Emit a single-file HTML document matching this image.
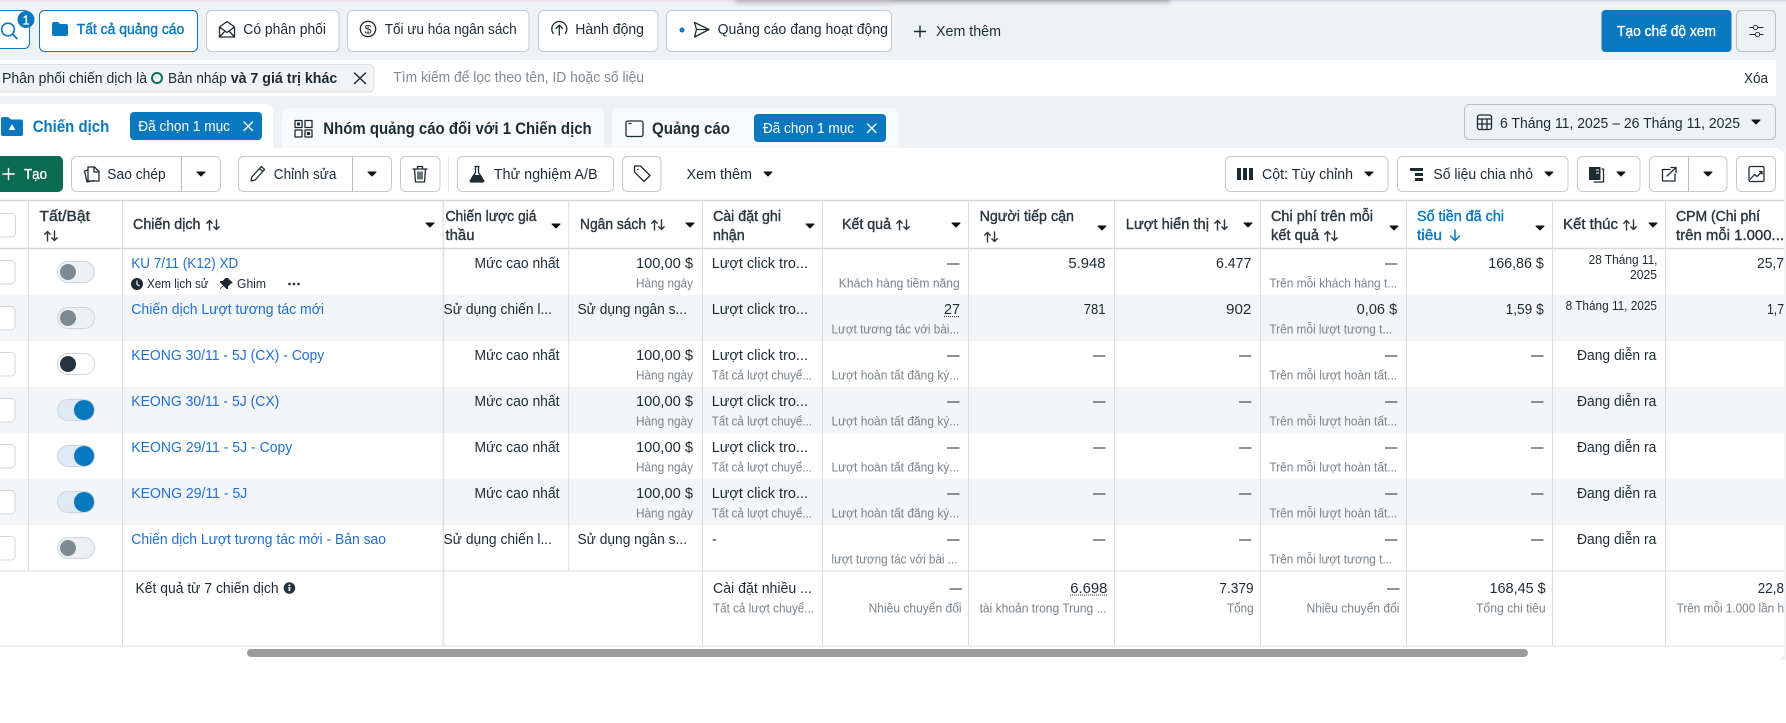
<!DOCTYPE html>
<html lang="vi">
<head>
<meta charset="utf-8">
<title>Chiến dịch</title>
<style>
html,body{margin:0;padding:0;background:#fff;width:1786px;height:723px;overflow:hidden}
svg{display:block}
text{font-family:"Liberation Sans","Noto Sans CJK SC",sans-serif;font-size:14.5px;fill:#1c2b33}
.b{font-weight:bold}
.s{font-size:12.5px;fill:#78838b}
.l{fill:#1f6fd0}
.u{fill:#0a78be;stroke:#0a78be;stroke-width:.4}
.w{fill:#fff}
.wb{fill:#fff;stroke:#fff;stroke-width:.35}
.h{fill:#2b3840;stroke:#2b3840;stroke-width:.4}
.t{font-size:16.5px;font-weight:bold}
.d{font-size:12.5px}
.btn{fill:#fff;stroke:#c3cbd2;stroke-width:1}
.ln{stroke:#dadde1;stroke-width:1}
.ic{fill:none;stroke:#1c2b33;stroke-width:1.3;stroke-linecap:round;stroke-linejoin:round}
.tri{fill:#1c2b33;stroke:#1c2b33;stroke-width:1;stroke-linejoin:round}
.cb{fill:#fff;stroke:#d0d5da}
.off{fill:#eef1f4;stroke:#cdd5dc}
.on{fill:#dfeaf4;stroke:#cdd5dc}
</style>
</head>
<body>
<svg width="1786" height="723" viewBox="0 0 1786 723" xmlns="http://www.w3.org/2000/svg">
<defs>
<filter id="bl" x="-10%" y="-200%" width="120%" height="500%"><feGaussianBlur stdDeviation="2.5"/></filter>
<linearGradient id="sh" x1="0" x2="1" y1="0" y2="0"><stop offset="0" stop-color="#000" stop-opacity=".05"/><stop offset="1" stop-color="#000" stop-opacity="0"/></linearGradient>
<g id="sort" fill="none" stroke="#2b3840" stroke-width="1.4" stroke-linecap="round" stroke-linejoin="round"><path d="M3.500 11V1.500M.8 4.200l2.700-2.700 2.700 2.700"/><path d="M10.500 1V10.500M7.800 7.800l2.700 2.700 2.700-2.700"/></g>
<path id="dn" d="M0 0h8l-4 4z" fill="#111" stroke="#111" stroke-width="1" stroke-linejoin="round"/>
</defs>

<rect width="1786" height="723" fill="#fff"/>
<rect width="1786" height="660" fill="#eff2f5"/>
<rect x="0" y="0" width="890" height="1.5" fill="#ecdfe1"/>
<rect x="890" y="0" width="896" height="1.5" fill="#d3dae4"/>
<rect x="735" y="-3" width="435" height="6" fill="#000" opacity=".22" filter="url(#bl)"/>

<!-- top row -->
<rect x="-10" y="10.500" width="39.500" height="38" rx="5" fill="#fff" stroke="#0a78be"/>
<circle cx="8" cy="29.500" r="6.300" fill="none" stroke="#0a78be" stroke-width="1.700"/>
<path d="M12.500 34l4.500 4.500" stroke="#0a78be" stroke-width="1.800" stroke-linecap="round"/>
<circle cx="26" cy="19.500" r="8.500" fill="#0a78be"/>
<text x="22.500" y="24.500" textLength="7" lengthAdjust="spacingAndGlyphs" class="wb" style="font-size:13px">1</text>

<rect x="39.500" y="10.500" width="158" height="41" rx="5" fill="#fff" stroke="#0a78be"/>
<path d="M52 24a2 2 0 0 1 2-2h4l2 2h6a2 2 0 0 1 2 2v8a2 2 0 0 1-2 2H54a2 2 0 0 1-2-2z" fill="#0a78be"/>
<text x="76.700" y="34" textLength="107.600" lengthAdjust="spacingAndGlyphs" class="u">Tất cả quảng cáo</text>

<rect x="206.500" y="10.500" width="132.500" height="41" rx="5" class="btn"/>
<path d="M219.500 27l7.500-5.500 7.500 5.500v10h-15zM219.500 27l7.500 5.500 7.500-5.500M219.500 37l5.500-6M234.500 37l-5.500-6" class="ic" stroke-width="1"/>
<text x="243.300" y="34" textLength="82.700" lengthAdjust="spacingAndGlyphs">Có phân phối</text>

<rect x="347.500" y="10.500" width="181.500" height="41" rx="5" class="btn"/>
<circle cx="368" cy="29" r="7.700" class="ic"/>
<text x="364.500" y="33.500" textLength="7" lengthAdjust="spacingAndGlyphs" style="font-size:12px">$</text>
<text x="384.700" y="34" textLength="132" lengthAdjust="spacingAndGlyphs">Tối ưu hóa ngân sách</text>

<rect x="538.500" y="10.500" width="119.500" height="41" rx="5" class="btn"/>
<path d="M553.300 33.500a7.500 7.500 0 1 1 12 0M559.300 35v-9.500M556 28.500l3.300-3.300 3.300 3.300" class="ic"/>
<text x="575.300" y="34" textLength="68.700" lengthAdjust="spacingAndGlyphs">Hành động</text>

<rect x="666.500" y="10.500" width="225" height="41" rx="5" class="btn"/>
<circle cx="682" cy="30" r="2.500" fill="#0a78be"/>
<path d="M694.500 22.500L709 29.500 694.500 37l2-7.500zM696.500 29.500H709" class="ic" stroke-width="1"/>
<text x="717.600" y="34" textLength="170.400" lengthAdjust="spacingAndGlyphs">Quảng cáo đang hoạt động</text>

<path d="M920 26v11M914.500 31.500h11" stroke="#1c2b33" stroke-width="1.400" stroke-linecap="round"/>
<text x="936" y="36" textLength="65" lengthAdjust="spacingAndGlyphs">Xem thêm</text>

<rect x="1601.500" y="10" width="130" height="42" rx="4" fill="#0a78be"/>
<text x="1617" y="36" textLength="99" lengthAdjust="spacingAndGlyphs" class="wb">Tạo chế độ xem</text>
<rect x="1736.500" y="10.500" width="39" height="41" rx="5" fill="none" stroke="#b5bfc8"/>
<path d="M1749.500 27.500h3.500M1758 27.500h5.500M1749.500 34.500h5.500M1760 34.500h3.500" fill="none" stroke="#1c2b33" stroke-width=".9"/>
<circle cx="1755.500" cy="27.500" r="2.200" fill="none" stroke="#1c2b33" stroke-width=".9"/>
<circle cx="1757.500" cy="34.500" r="2.200" fill="none" stroke="#1c2b33" stroke-width=".9"/>

<!-- filter row -->
<rect x="0" y="60" width="1776" height="36" rx="2" fill="#fff"/>
<rect x="-4" y="64.500" width="378" height="27.500" rx="5" fill="#f2f3f5" stroke="#dcdfe2"/>
<text x="2" y="83" textLength="145" lengthAdjust="spacingAndGlyphs">Phân phối chiến dịch là</text>
<circle cx="157" cy="78" r="5" fill="none" stroke="#0b7355" stroke-width="2"/>
<text x="168" y="83" textLength="58.700" lengthAdjust="spacingAndGlyphs">Bản nháp</text>
<text x="230.700" y="83" textLength="106.600" lengthAdjust="spacingAndGlyphs" class="b">và 7 giá trị khác</text>
<path d="M354.500 73l11 10.500M365.500 73l-11 10.500" stroke="#1c2b33" stroke-width="1.500" stroke-linecap="round"/>
<text x="393.300" y="82" textLength="250.700" lengthAdjust="spacingAndGlyphs" style="fill:#808a92">Tìm kiếm để lọc theo tên, ID hoặc số liệu</text>
<text x="1744" y="83" textLength="24" lengthAdjust="spacingAndGlyphs">Xóa</text>

<!-- tabs -->
<path d="M-8 160V112a8 8 0 0 1 8-8h265a8 8 0 0 1 8 8v48z" fill="#fff"/>
<path d="M282 160v-44a8 8 0 0 1 8-8h306a8 8 0 0 1 8 8v44z" fill="#f8fafb"/>
<path d="M612 160v-44a8 8 0 0 1 8-8h271a8 8 0 0 1 8 8v44z" fill="#f8fafb"/>

<path d="M1 119a2 2 0 0 1 2-2h5l3 2.500h10a2 2 0 0 1 2 2V134a2 2 0 0 1-2 2H3a2 2 0 0 1-2-2z" fill="#0a78be"/>
<path d="M12 124l3.300 6h-6.600z" fill="#fff"/>
<text x="32.700" y="132" textLength="76.600" lengthAdjust="spacingAndGlyphs" class="t" style="fill:#0a78be">Chiến dịch</text>
<rect x="130" y="112" width="132" height="28" rx="4" fill="#0a78be"/>
<text x="138.300" y="131" textLength="91.700" lengthAdjust="spacingAndGlyphs" class="w">Đã chọn 1 mục</text>
<path d="M244 122l8.500 8.500M252.500 122l-8.500 8.500" stroke="#fff" stroke-width="1.300" stroke-linecap="round"/>

<path d="M295 120.500h7v7h-7zM305 120.500h7v7h-7zM295 130h7v7h-7zM305 130h7v7h-7z" class="ic" stroke-width="1.100"/>
<rect x="297" y="122.500" width="3" height="3" fill="#1c2b33"/><rect x="307" y="132" width="3" height="3" fill="#1c2b33"/>
<text x="323.300" y="134" textLength="268.400" lengthAdjust="spacingAndGlyphs" class="t">Nhóm quảng cáo đối với 1 Chiến dịch</text>

<rect x="626" y="121" width="17" height="15.500" rx="2" class="ic" stroke-width="1.100"/>
<path d="M629 123.500h2" class="ic" stroke-width="1"/>
<text x="652" y="134" textLength="78" lengthAdjust="spacingAndGlyphs" class="t">Quảng cáo</text>
<rect x="754" y="114" width="132" height="28" rx="4" fill="#0a78be"/>
<text x="763" y="133" textLength="91" lengthAdjust="spacingAndGlyphs" class="w">Đã chọn 1 mục</text>
<path d="M867.500 124l8.500 8.500M876 124l-8.500 8.500" stroke="#fff" stroke-width="1.300" stroke-linecap="round"/>

<rect x="1464.500" y="104.500" width="311" height="35" rx="5" fill="#eff2f5" stroke="#b5bfc8"/>
<rect x="1477.500" y="115" width="14" height="14.500" rx="2" class="ic" stroke-width="1.100"/>
<path d="M1477.500 119h14M1477.500 124h14M1482 119v10.500M1487 119v10.500" class="ic" stroke-width=".9"/>
<text x="1500" y="128" textLength="240" lengthAdjust="spacingAndGlyphs">6 Tháng 11, 2025 – 26 Tháng 11, 2025</text>
<use href="#dn" x="1752" y="120"/>

<!-- toolbar white panel -->
<path d="M0 148H1776a8 8 0 0 1 8 8V652a8 8 0 0 1-8 8H0z" fill="#fff"/>

<rect x="-6" y="156" width="69" height="36" rx="5" fill="#0a6b50"/>
<path d="M8.500 168.500v11M3 174h11" stroke="#fff" stroke-width="1.500" stroke-linecap="round"/>
<text x="24" y="179" textLength="23" lengthAdjust="spacingAndGlyphs" class="wb">Tạo</text>

<rect x="71.500" y="156.500" width="149" height="35" rx="5" class="btn"/>
<path d="M181.500 157v35" style="stroke:#b5bfc8"/>
<path d="M88 167h6.500l4.500 4.500V181H88zM94 167v5h5M88 170l-3.500 1 2.500 11 7-1.500" class="ic" stroke-width="1"/>
<text x="107.300" y="179" textLength="58.400" lengthAdjust="spacingAndGlyphs">Sao chép</text>
<use href="#dn" x="197" y="172"/>

<rect x="238.500" y="156.500" width="153" height="35" rx="5" class="btn"/>
<path d="M352.500 157v35" style="stroke:#b5bfc8"/>
<path d="M251 181l.8-4 9.500-10.500 3.300 3-9.500 10.500zM259.500 168.500l3.300 3" class="ic" stroke-width="1"/>
<text x="273.800" y="179" textLength="62.600" lengthAdjust="spacingAndGlyphs">Chỉnh sửa</text>
<use href="#dn" x="368" y="172"/>

<rect x="400.500" y="156.500" width="39.500" height="35" rx="5" class="btn"/>
<path d="M413 169h14M417.500 169v-2.500h5v2.500M414.500 169l1 13h9l1-13M418 172v7M420 172v7M422 172v7" class="ic" stroke-width=".9"/>
<path d="M448.500 156v36" style="stroke:#e4e7ea"/>

<rect x="457.500" y="156.500" width="156" height="35" rx="5" class="btn"/>
<path d="M475 166.500h4M475.500 166.500v6l-5 8a1 1 0 0 0 1 1.500h11a1 1 0 0 0 1-1.500l-5-8v-6" class="ic" stroke-width="1"/>
<path d="M473 175h8l3.500 6a.7.7 0 0 1-.7 1h-13.600a.7.7 0 0 1-.7-1z" fill="#1c2b33"/>
<text x="493.700" y="179" textLength="103.900" lengthAdjust="spacingAndGlyphs">Thử nghiệm A/B</text>

<rect x="622.500" y="156.500" width="38.500" height="35" rx="5" class="btn"/>
<path d="M634.500 168.500v-2.500h6l9.500 9.500-6 6-9.500-9.500zM637.500 169.500h.5" class="ic" stroke-width="1"/>
<text x="686.500" y="179" textLength="65.500" lengthAdjust="spacingAndGlyphs">Xem thêm</text>
<use href="#dn" x="764" y="172"/>

<rect x="1225.500" y="156.500" width="162.500" height="35" rx="5" class="btn"/>
<path d="M1237 168h4v12h-4zM1243 168h4v12h-4zM1249 168h4v12h-4z" fill="#1c2b33"/>
<text x="1262" y="179" textLength="91" lengthAdjust="spacingAndGlyphs">Cột: Tùy chỉnh</text>
<use href="#dn" x="1365" y="172"/>

<rect x="1397.500" y="156.500" width="170.500" height="35" rx="5" class="btn"/>
<path d="M1410 168h13v3h-13zM1415 173h8v3h-8zM1415 178h8v3h-8z" fill="#1c2b33"/>
<text x="1433.400" y="179" textLength="99.600" lengthAdjust="spacingAndGlyphs">Số liệu chia nhỏ</text>
<use href="#dn" x="1545" y="172"/>

<rect x="1577.500" y="156.500" width="62.500" height="35" rx="5" class="btn"/>
<path d="M1589 167h11.500v13H1589z" fill="#1c2b33"/>
<path d="M1602 169h1.500v13H1594" class="ic" stroke-width="1.200"/>
<path d="M1596 170h3M1596 173h3" stroke="#fff"/>
<use href="#dn" x="1617" y="172"/>

<rect x="1649.500" y="156.500" width="77.500" height="35" rx="5" class="btn"/>
<path d="M1688.500 157v35" style="stroke:#b5bfc8"/>
<path d="M1670 169.500h-7.500v11.500h12.500v-7M1667 176l9-8.500M1671 167.500h5v5" class="ic" stroke-width="1.200"/>
<use href="#dn" x="1704" y="172"/>

<rect x="1736.500" y="156.500" width="39" height="35" rx="5" class="btn"/>
<rect x="1749" y="166.500" width="15" height="15" rx="1.500" class="ic" stroke-width="1"/>
<path d="M1750.500 179l4-4.500 2.500 2 5-5M1759.500 171.500h2.500v2.500" class="ic" stroke-width="1"/>

<!-- table backgrounds -->
<rect x="0" y="295" width="1784" height="46" fill="#f3f5f7"/>
<rect x="0" y="387" width="1784" height="46" fill="#f3f5f7"/>
<rect x="0" y="479" width="1784" height="46" fill="#f3f5f7"/>

<!-- table lines -->
<path d="M0 200.500H1784M0 248.500H1784" stroke="#d5d8dc" stroke-width="1.500"/>
<path d="M0 571H1784M0 646H1784" stroke="#e2e4e7" stroke-width="1.300"/>
<path d="M28.500 201V571M568.700 201V571" class="ln"/>
<path d="M122.500 201V646M702.500 201V646M822.500 201V646M968.500 201V646M1114.500 201V646M1260.500 201V646M1406.500 201V646M1552.500 201V646M1665.500 201V646" class="ln"/>
<path d="M443 201V646" stroke="#e0e2e5" stroke-width="1"/>
<rect x="443" y="201" width="3" height="445" fill="url(#sh)"/>

<!-- header -->
<rect x="-8" y="213.500" width="23.500" height="23.500" rx="4" class="cb"/>
<text x="39.400" y="221" textLength="50.600" lengthAdjust="spacingAndGlyphs" class="h">Tất/Bật</text>
<use href="#sort" x="44" y="230"/>
<text x="133" y="229" textLength="67.500" lengthAdjust="spacingAndGlyphs" class="h">Chiến dịch</text>
<use href="#sort" x="206" y="219"/>
<use href="#dn" x="426" y="223"/>
<text x="445.500" y="221" textLength="91" lengthAdjust="spacingAndGlyphs" class="h">Chiến lược giá</text>
<text x="445.500" y="240" textLength="29" lengthAdjust="spacingAndGlyphs" class="h">thầu</text>
<use href="#dn" x="552" y="224"/>
<text x="580" y="229" textLength="66" lengthAdjust="spacingAndGlyphs" class="h">Ngân sách</text>
<use href="#sort" x="651" y="219"/>
<use href="#dn" x="686" y="223"/>
<text x="713" y="221" textLength="68" lengthAdjust="spacingAndGlyphs" class="h">Cài đặt ghi</text>
<text x="713" y="240" textLength="31.600" lengthAdjust="spacingAndGlyphs" class="h">nhận</text>
<use href="#dn" x="806" y="224"/>
<text x="842" y="229" textLength="49" lengthAdjust="spacingAndGlyphs" class="h">Kết quả</text>
<use href="#sort" x="896" y="219"/>
<use href="#dn" x="952" y="223"/>
<text x="979.600" y="221" textLength="94.400" lengthAdjust="spacingAndGlyphs" class="h">Người tiếp cận</text>
<use href="#sort" x="984" y="231"/>
<use href="#dn" x="1098" y="226"/>
<text x="1125.800" y="229" textLength="83.200" lengthAdjust="spacingAndGlyphs" class="h">Lượt hiển thị</text>
<use href="#sort" x="1214" y="219"/>
<use href="#dn" x="1244" y="223"/>
<text x="1271" y="221" textLength="102" lengthAdjust="spacingAndGlyphs" class="h">Chi phí trên mỗi</text>
<text x="1271" y="240" textLength="48" lengthAdjust="spacingAndGlyphs" class="h">kết quả</text>
<use href="#sort" x="1324" y="230"/>
<use href="#dn" x="1390" y="226"/>
<text x="1417" y="221" textLength="87" lengthAdjust="spacingAndGlyphs" class="u">Số tiền đã chi</text>
<text x="1417" y="240" textLength="25" lengthAdjust="spacingAndGlyphs" class="u">tiêu</text>
<path d="M1455 230v10.500M1450.500 236l4.500 4.500 4.500-4.500" fill="none" stroke="#0a78be" stroke-width="1.500" stroke-linecap="round" stroke-linejoin="round"/>
<use href="#dn" x="1536" y="226"/>
<text x="1563" y="229" textLength="55" lengthAdjust="spacingAndGlyphs" class="h">Kết thúc</text>
<use href="#sort" x="1623" y="219"/>
<use href="#dn" x="1649" y="223"/>
<text x="1676" y="221" textLength="84" lengthAdjust="spacingAndGlyphs" class="h">CPM (Chi phí</text>
<text x="1676" y="240" textLength="108" lengthAdjust="spacingAndGlyphs" class="h">trên mỗi 1.000...</text>

<!-- checkboxes -->
<rect x="-8" y="260.500" width="23" height="23.500" rx="4" class="cb"/>
<rect x="-8" y="306.500" width="23" height="23.500" rx="4" class="cb"/>
<rect x="-8" y="352.500" width="23" height="23.500" rx="4" class="cb"/>
<rect x="-8" y="398.500" width="23" height="23.500" rx="4" class="cb"/>
<rect x="-8" y="444.500" width="23" height="23.500" rx="4" class="cb"/>
<rect x="-8" y="490.500" width="23" height="23.500" rx="4" class="cb"/>
<rect x="-8" y="536.500" width="23" height="23.500" rx="4" class="cb"/>

<!-- toggles -->
<rect x="57.500" y="261.500" width="37" height="21" rx="10.500" class="off"/><circle cx="68" cy="272" r="8" fill="#7c8a94"/>
<rect x="57.500" y="307.500" width="37" height="21" rx="10.500" class="off"/><circle cx="68" cy="318" r="8" fill="#7c8a94"/>
<rect x="57.500" y="353.500" width="37" height="21" rx="10.500" fill="#fff" stroke="#cdd5dc"/><circle cx="68" cy="364" r="8" fill="#25343f"/>
<rect x="57.500" y="399.500" width="37" height="21" rx="10.500" class="on"/><circle cx="84" cy="410" r="10" fill="#0a78be"/>
<rect x="57.500" y="445.500" width="37" height="21" rx="10.500" class="on"/><circle cx="84" cy="456" r="10" fill="#0a78be"/>
<rect x="57.500" y="491.500" width="37" height="21" rx="10.500" class="on"/><circle cx="84" cy="502" r="10" fill="#0a78be"/>
<rect x="57.500" y="537.500" width="37" height="21" rx="10.500" class="off"/><circle cx="68" cy="548" r="8" fill="#7c8a94"/>

<!-- campaign names -->
<text x="131.300" y="268" textLength="107" lengthAdjust="spacingAndGlyphs" class="l">KU 7/11 (K12) XD</text>
<circle cx="137" cy="284" r="6" fill="#1c2b33"/>
<path d="M137 280.500V284.500l2.500 1.500" fill="none" stroke="#fff" stroke-width="1.100"/>
<text x="147" y="288" textLength="61.600" lengthAdjust="spacingAndGlyphs" class="d">Xem lịch sử</text>
<path d="M228 278l5 5-2 .5-3 3 0 2.500-1.500 0-3-3-3 3-.5-.5 3-3-3-3v-1.500l2.500 0 3-3z" fill="#1c2b33"/>
<text x="237" y="288" textLength="29" lengthAdjust="spacingAndGlyphs" class="d">Ghim</text>
<circle cx="289.500" cy="284" r="1.300" fill="#1c2b33"/><circle cx="294" cy="284" r="1.300" fill="#1c2b33"/><circle cx="298.500" cy="284" r="1.300" fill="#1c2b33"/>
<text x="131.300" y="314" textLength="192.700" lengthAdjust="spacingAndGlyphs" class="l">Chiến dịch Lượt tương tác mới</text>
<text x="131.300" y="360" textLength="193" lengthAdjust="spacingAndGlyphs" class="l">KEONG 30/11 - 5J (CX) - Copy</text>
<text x="131.300" y="406" textLength="148" lengthAdjust="spacingAndGlyphs" class="l">KEONG 30/11 - 5J (CX)</text>
<text x="131.300" y="452" textLength="161" lengthAdjust="spacingAndGlyphs" class="l">KEONG 29/11 - 5J - Copy</text>
<text x="131.300" y="498" textLength="116" lengthAdjust="spacingAndGlyphs" class="l">KEONG 29/11 - 5J</text>
<text x="131.300" y="544" textLength="254.700" lengthAdjust="spacingAndGlyphs" class="l">Chiến dịch Lượt tương tác mới - Bản sao</text>

<!-- bid strategy -->
<text x="474.500" y="268" textLength="85" lengthAdjust="spacingAndGlyphs">Mức cao nhất</text>
<text x="443.500" y="314" textLength="108.500" lengthAdjust="spacingAndGlyphs">Sử dụng chiến l...</text>
<text x="474.500" y="360" textLength="85" lengthAdjust="spacingAndGlyphs">Mức cao nhất</text>
<text x="474.500" y="406" textLength="85" lengthAdjust="spacingAndGlyphs">Mức cao nhất</text>
<text x="474.500" y="452" textLength="85" lengthAdjust="spacingAndGlyphs">Mức cao nhất</text>
<text x="474.500" y="498" textLength="85" lengthAdjust="spacingAndGlyphs">Mức cao nhất</text>
<text x="443.500" y="544" textLength="108.500" lengthAdjust="spacingAndGlyphs">Sử dụng chiến l...</text>

<!-- budget -->
<text x="636" y="268" textLength="57" lengthAdjust="spacingAndGlyphs">100,00 $</text>
<text x="636" y="287.500" textLength="57" lengthAdjust="spacingAndGlyphs" class="s">Hàng ngày</text>
<text x="577.500" y="314" textLength="109.500" lengthAdjust="spacingAndGlyphs">Sử dụng ngân s...</text>
<text x="636" y="360" textLength="57" lengthAdjust="spacingAndGlyphs">100,00 $</text>
<text x="636" y="379.500" textLength="57" lengthAdjust="spacingAndGlyphs" class="s">Hàng ngày</text>
<text x="636" y="406" textLength="57" lengthAdjust="spacingAndGlyphs">100,00 $</text>
<text x="636" y="425.500" textLength="57" lengthAdjust="spacingAndGlyphs" class="s">Hàng ngày</text>
<text x="636" y="452" textLength="57" lengthAdjust="spacingAndGlyphs">100,00 $</text>
<text x="636" y="471.500" textLength="57" lengthAdjust="spacingAndGlyphs" class="s">Hàng ngày</text>
<text x="636" y="498" textLength="57" lengthAdjust="spacingAndGlyphs">100,00 $</text>
<text x="636" y="517.500" textLength="57" lengthAdjust="spacingAndGlyphs" class="s">Hàng ngày</text>
<text x="577.500" y="544" textLength="109.500" lengthAdjust="spacingAndGlyphs">Sử dụng ngân s...</text>

<!-- attribution -->
<text x="711.700" y="268" textLength="96.300" lengthAdjust="spacingAndGlyphs">Lượt click tro...</text>
<text x="711.700" y="314" textLength="96.300" lengthAdjust="spacingAndGlyphs">Lượt click tro...</text>
<text x="711.700" y="360" textLength="96.300" lengthAdjust="spacingAndGlyphs">Lượt click tro...</text>
<text x="711.700" y="379.500" textLength="100.300" lengthAdjust="spacingAndGlyphs" class="s">Tất cả lượt chuyể...</text>
<text x="711.700" y="406" textLength="96.300" lengthAdjust="spacingAndGlyphs">Lượt click tro...</text>
<text x="711.700" y="425.500" textLength="100.300" lengthAdjust="spacingAndGlyphs" class="s">Tất cả lượt chuyể...</text>
<text x="711.700" y="452" textLength="96.300" lengthAdjust="spacingAndGlyphs">Lượt click tro...</text>
<text x="711.700" y="471.500" textLength="100.300" lengthAdjust="spacingAndGlyphs" class="s">Tất cả lượt chuyể...</text>
<text x="711.700" y="498" textLength="96.300" lengthAdjust="spacingAndGlyphs">Lượt click tro...</text>
<text x="711.700" y="517.500" textLength="100.300" lengthAdjust="spacingAndGlyphs" class="s">Tất cả lượt chuyể...</text>
<text x="712" y="544">-</text>

<!-- results -->
<text x="947" y="268" textLength="12.500" lengthAdjust="spacingAndGlyphs">—</text>
<text x="838.800" y="287.500" textLength="120.900" lengthAdjust="spacingAndGlyphs" class="s">Khách hàng tiềm năng</text>
<text x="944" y="314" textLength="16" lengthAdjust="spacingAndGlyphs">27</text>
<path d="M944 316.500h16" stroke="#1c2b33" stroke-dasharray="1 1"/>
<text x="831.500" y="333.500" textLength="127.800" lengthAdjust="spacingAndGlyphs" class="s">Lượt tương tác với bài...</text>
<text x="947" y="360" textLength="12.500" lengthAdjust="spacingAndGlyphs">—</text>
<text x="831.500" y="379.500" textLength="127.800" lengthAdjust="spacingAndGlyphs" class="s">Lượt hoàn tất đăng ký...</text>
<text x="947" y="406" textLength="12.500" lengthAdjust="spacingAndGlyphs">—</text>
<text x="831.500" y="425.500" textLength="127.800" lengthAdjust="spacingAndGlyphs" class="s">Lượt hoàn tất đăng ký...</text>
<text x="947" y="452" textLength="12.500" lengthAdjust="spacingAndGlyphs">—</text>
<text x="831.500" y="471.500" textLength="127.800" lengthAdjust="spacingAndGlyphs" class="s">Lượt hoàn tất đăng ký...</text>
<text x="947" y="498" textLength="12.500" lengthAdjust="spacingAndGlyphs">—</text>
<text x="831.500" y="517.500" textLength="127.800" lengthAdjust="spacingAndGlyphs" class="s">Lượt hoàn tất đăng ký...</text>
<text x="947" y="544" textLength="12.500" lengthAdjust="spacingAndGlyphs">—</text>
<text x="831.500" y="563.500" textLength="125.900" lengthAdjust="spacingAndGlyphs" class="s">lượt tương tác với bài ...</text>

<!-- reach -->
<text x="1068.400" y="268" textLength="37.100" lengthAdjust="spacingAndGlyphs">5.948</text>
<text x="1083.700" y="314" textLength="21.800" lengthAdjust="spacingAndGlyphs">781</text>
<text x="1093" y="360" textLength="12.500" lengthAdjust="spacingAndGlyphs">—</text>
<text x="1093" y="406" textLength="12.500" lengthAdjust="spacingAndGlyphs">—</text>
<text x="1093" y="452" textLength="12.500" lengthAdjust="spacingAndGlyphs">—</text>
<text x="1093" y="498" textLength="12.500" lengthAdjust="spacingAndGlyphs">—</text>
<text x="1093" y="544" textLength="12.500" lengthAdjust="spacingAndGlyphs">—</text>

<!-- impressions -->
<text x="1216" y="268" textLength="35.400" lengthAdjust="spacingAndGlyphs">6.477</text>
<text x="1226" y="314" textLength="25.400" lengthAdjust="spacingAndGlyphs">902</text>
<text x="1239" y="360" textLength="12.500" lengthAdjust="spacingAndGlyphs">—</text>
<text x="1239" y="406" textLength="12.500" lengthAdjust="spacingAndGlyphs">—</text>
<text x="1239" y="452" textLength="12.500" lengthAdjust="spacingAndGlyphs">—</text>
<text x="1239" y="498" textLength="12.500" lengthAdjust="spacingAndGlyphs">—</text>
<text x="1239" y="544" textLength="12.500" lengthAdjust="spacingAndGlyphs">—</text>

<!-- cost per result -->
<text x="1385" y="268" textLength="12.500" lengthAdjust="spacingAndGlyphs">—</text>
<text x="1269.400" y="287.500" textLength="127.800" lengthAdjust="spacingAndGlyphs" class="s">Trên mỗi khách hàng t...</text>
<text x="1356.700" y="314" textLength="40.500" lengthAdjust="spacingAndGlyphs">0,06 $</text>
<text x="1269.400" y="333.500" textLength="122.900" lengthAdjust="spacingAndGlyphs" class="s">Trên mỗi lượt tương t...</text>
<text x="1385" y="360" textLength="12.500" lengthAdjust="spacingAndGlyphs">—</text>
<text x="1269.400" y="379.500" textLength="127.800" lengthAdjust="spacingAndGlyphs" class="s">Trên mỗi lượt hoàn tất...</text>
<text x="1385" y="406" textLength="12.500" lengthAdjust="spacingAndGlyphs">—</text>
<text x="1269.400" y="425.500" textLength="127.800" lengthAdjust="spacingAndGlyphs" class="s">Trên mỗi lượt hoàn tất...</text>
<text x="1385" y="452" textLength="12.500" lengthAdjust="spacingAndGlyphs">—</text>
<text x="1269.400" y="471.500" textLength="127.800" lengthAdjust="spacingAndGlyphs" class="s">Trên mỗi lượt hoàn tất...</text>
<text x="1385" y="498" textLength="12.500" lengthAdjust="spacingAndGlyphs">—</text>
<text x="1269.400" y="517.500" textLength="127.800" lengthAdjust="spacingAndGlyphs" class="s">Trên mỗi lượt hoàn tất...</text>
<text x="1385" y="544" textLength="12.500" lengthAdjust="spacingAndGlyphs">—</text>
<text x="1269.400" y="563.500" textLength="122.900" lengthAdjust="spacingAndGlyphs" class="s">Trên mỗi lượt tương t...</text>

<!-- spend -->
<text x="1488.300" y="268" textLength="55.500" lengthAdjust="spacingAndGlyphs">166,86 $</text>
<text x="1505.600" y="314" textLength="38.200" lengthAdjust="spacingAndGlyphs">1,59 $</text>
<text x="1531" y="360" textLength="12.500" lengthAdjust="spacingAndGlyphs">—</text>
<text x="1531" y="406" textLength="12.500" lengthAdjust="spacingAndGlyphs">—</text>
<text x="1531" y="452" textLength="12.500" lengthAdjust="spacingAndGlyphs">—</text>
<text x="1531" y="498" textLength="12.500" lengthAdjust="spacingAndGlyphs">—</text>
<text x="1531" y="544" textLength="12.500" lengthAdjust="spacingAndGlyphs">—</text>

<!-- end date -->
<text x="1588.600" y="264" textLength="68.900" lengthAdjust="spacingAndGlyphs" class="d">28 Tháng 11,</text>
<text x="1630" y="279" textLength="27" lengthAdjust="spacingAndGlyphs" class="d">2025</text>
<text x="1565.600" y="310" textLength="91.400" lengthAdjust="spacingAndGlyphs" class="d">8 Tháng 11, 2025</text>
<text x="1577" y="360" textLength="79.300" lengthAdjust="spacingAndGlyphs">Đang diễn ra</text>
<text x="1577" y="406" textLength="79.300" lengthAdjust="spacingAndGlyphs">Đang diễn ra</text>
<text x="1577" y="452" textLength="79.300" lengthAdjust="spacingAndGlyphs">Đang diễn ra</text>
<text x="1577" y="498" textLength="79.300" lengthAdjust="spacingAndGlyphs">Đang diễn ra</text>
<text x="1577" y="544" textLength="79.300" lengthAdjust="spacingAndGlyphs">Đang diễn ra</text>

<!-- cpm -->
<text x="1757" y="268" textLength="27" lengthAdjust="spacingAndGlyphs">25,7</text>
<text x="1767" y="314" textLength="17" lengthAdjust="spacingAndGlyphs">1,7</text>

<!-- footer -->
<text x="135.500" y="593" textLength="143.100" lengthAdjust="spacingAndGlyphs">Kết quả từ 7 chiến dịch</text>
<circle cx="289.400" cy="588" r="5.800" fill="#25343f"/>
<rect x="288.500" y="587" width="1.800" height="4" fill="#fff"/><rect x="288.500" y="584.500" width="1.800" height="1.700" fill="#fff"/>
<text x="713" y="593" textLength="99" lengthAdjust="spacingAndGlyphs">Cài đặt nhiều ...</text>
<text x="713" y="612.700" textLength="101" lengthAdjust="spacingAndGlyphs" class="s">Tất cả lượt chuyể...</text>
<text x="949.500" y="593" textLength="12.500" lengthAdjust="spacingAndGlyphs">—</text>
<text x="868.600" y="612.700" textLength="93" lengthAdjust="spacingAndGlyphs" class="s">Nhiều chuyển đổi</text>
<text x="1070.300" y="593" textLength="37.100" lengthAdjust="spacingAndGlyphs">6.698</text>
<path d="M1070 595h37.500" stroke="#1c2b33" stroke-dasharray="1 1"/>
<text x="979.600" y="612.700" textLength="127" lengthAdjust="spacingAndGlyphs" class="s">tài khoản trong Trung ...</text>
<text x="1219.300" y="593" textLength="34.400" lengthAdjust="spacingAndGlyphs">7.379</text>
<text x="1227" y="612.700" textLength="26.700" lengthAdjust="spacingAndGlyphs" class="s">Tổng</text>
<text x="1387" y="593" textLength="12.500" lengthAdjust="spacingAndGlyphs">—</text>
<text x="1306.500" y="612.700" textLength="93" lengthAdjust="spacingAndGlyphs" class="s">Nhiều chuyển đổi</text>
<text x="1489.500" y="593" textLength="56.200" lengthAdjust="spacingAndGlyphs">168,45 $</text>
<text x="1476" y="612.700" textLength="69.700" lengthAdjust="spacingAndGlyphs" class="s">Tổng chi tiêu</text>
<text x="1757.800" y="593" textLength="26.200" lengthAdjust="spacingAndGlyphs">22,8</text>
<text x="1676.600" y="612.700" textLength="107.400" lengthAdjust="spacingAndGlyphs" class="s">Trên mỗi 1.000 lần h</text>

<!-- right edge clip -->
<rect x="1784" y="148" width="2" height="512" fill="#f3f5f7"/>

<!-- scrollbar -->
<rect x="247" y="649" width="1281" height="8" rx="4" fill="#9b9b9b"/>
</svg>
</body>
</html>
